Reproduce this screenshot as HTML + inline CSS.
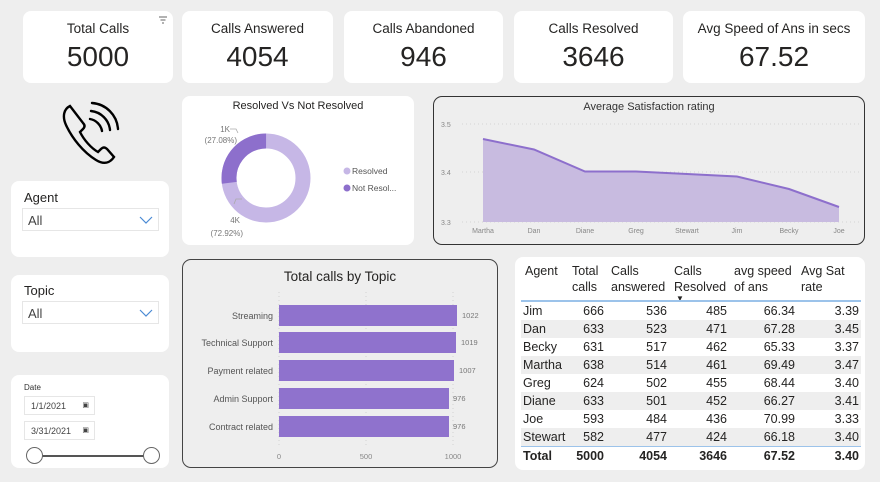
<!DOCTYPE html>
<html><head><meta charset="utf-8"><style>
*{box-sizing:border-box;margin:0;padding:0}
body{width:880px;height:482px;background:#eeeeee;font-family:"Liberation Sans","DejaVu Sans",sans-serif;position:relative;overflow:hidden;color:#252423}
.c{position:absolute;background:#fff;border-radius:8px}
.kt{position:absolute;width:100%;text-align:center;top:10px;font-size:13.5px;color:#252423}
.kv{position:absolute;width:100%;text-align:center;top:30px;font-size:28px;color:#252423}
.sl{font-size:13px;position:absolute;left:13px}
.dd{position:absolute;left:11px;width:137px;height:23px;border:1px solid #e6e6e6;font-size:13px;padding:4px 0 0 5px;color:#444}
.dd svg{position:absolute;right:5px;top:7px}
table{border-collapse:collapse;font-size:12.5px}
td{height:18px;padding:0 2px;text-align:right}
td:first-child{text-align:left;padding-left:2px}
tr.g td{background:#eeeeee}
</style></head><body>
<div class="c" style="left:23px;top:11px;width:150px;height:72px"><div class="kt">Total Calls</div><div class="kv">5000</div>
<svg style="position:absolute;right:5px;top:5px" width="10" height="8"><path d="M1 1h8M2.5 4h5M4 7h2" stroke="#666" stroke-width="1"/></svg></div>
<div class="c" style="left:182px;top:11px;width:151px;height:72px"><div class="kt">Calls Answered</div><div class="kv">4054</div></div>
<div class="c" style="left:344px;top:11px;width:159px;height:72px"><div class="kt">Calls Abandoned</div><div class="kv">946</div></div>
<div class="c" style="left:514px;top:11px;width:159px;height:72px"><div class="kt">Calls Resolved</div><div class="kv">3646</div></div>
<div class="c" style="left:683px;top:11px;width:182px;height:72px"><div class="kt">Avg Speed of Ans in secs</div><div class="kv">67.52</div></div>

<svg style="position:absolute;left:58px;top:100px" width="70" height="70" viewBox="0 0 70 70" fill="none" stroke="#000" stroke-width="2.4" stroke-linecap="round">
<path d="M12 6c-6 3-8 10-4 19c6 13 17 27 30 35c8 5 14 3 18-3l-7-8c-2-2-4-2-6 0l-3 3c-7-4-14-12-18-20l3-3c2-2 2-4 0-6z"/>
<path d="M32 19c6 1 11 6 12 12M33 11c10 1 18 9 19 19M34 3c14 1 25 12 26 26"/>
</svg>

<div class="c" style="left:11px;top:181px;width:158px;height:76px"><div class="sl" style="top:9px">Agent</div>
<div class="dd" style="top:27px">All<svg width="14" height="8"><path d="M1 1l6 6 6-6" stroke="#4a8ad4" fill="none" stroke-width="1.2"/></svg></div></div>
<div class="c" style="left:11px;top:275px;width:158px;height:77px"><div class="sl" style="top:8px">Topic</div>
<div class="dd" style="top:26px">All<svg width="14" height="8"><path d="M1 1l6 6 6-6" stroke="#4a8ad4" fill="none" stroke-width="1.2"/></svg></div></div>
<div class="c" style="left:11px;top:375px;width:158px;height:93px">
<div style="position:absolute;left:13px;top:8px;font-size:8px;color:#333">Date</div>
<div style="position:absolute;left:13px;top:21px;width:71px;height:19px;border:1px solid #e6e6e6;font-size:9px;padding:4px 0 0 6px;color:#444">1/1/2021<span style="position:absolute;right:5px;top:4px;font-size:7px">▣</span></div>
<div style="position:absolute;left:13px;top:46px;width:71px;height:19px;border:1px solid #e6e6e6;font-size:9px;padding:4px 0 0 6px;color:#444">3/31/2021<span style="position:absolute;right:5px;top:4px;font-size:7px">▣</span></div>
<div style="position:absolute;left:24px;top:80px;width:118px;height:2px;background:#555"></div>
<div style="position:absolute;left:15px;top:72px;width:17px;height:17px;border:1.5px solid #666;border-radius:50%;background:#fff"></div>
<div style="position:absolute;left:132px;top:72px;width:17px;height:17px;border:1.5px solid #666;border-radius:50%;background:#fff"></div>
</div>

<div class="c" style="left:182px;top:96px;width:232px;height:149px">
<div style="position:absolute;width:100%;text-align:center;top:4px;font-size:11px">Resolved Vs Not Resolved</div>
<svg style="position:absolute;left:0;top:0" width="232" height="149">
<circle cx="84" cy="82" r="37" fill="none" stroke="#c6b7e6" stroke-width="15"/>
<circle cx="84" cy="82" r="37" fill="none" stroke="#8d6fcc" stroke-width="15" stroke-dasharray="62.96 232.5" transform="rotate(-187.5 84 82) " />
<path d="M48 33h6l2 4M52 108l2-5h6" stroke="#aaa" fill="none" stroke-width="0.8"/>
<text x="48" y="36" font-size="8" fill="#777" text-anchor="end">1K</text>
<text x="55" y="47" font-size="8" fill="#777" text-anchor="end">(27.08%)</text>
<text x="58" y="127" font-size="8" fill="#777" text-anchor="end">4K</text>
<text x="61" y="140" font-size="8" fill="#777" text-anchor="end">(72.92%)</text>
<circle cx="165" cy="75" r="3.5" fill="#c6b7e6"/><text x="170" y="78" font-size="8.5" fill="#555">Resolved</text>
<circle cx="165" cy="92" r="3.5" fill="#8d6fcc"/><text x="170" y="95" font-size="8.5" fill="#555">Not Resol...</text>
</svg></div>

<div style="position:absolute;left:433px;top:96px;width:432px;height:149px;border:1.5px solid #333;border-radius:9px;background:#eeeeee">
<div style="position:absolute;width:100%;text-align:center;top:4px;font-size:11px;color:#333">Average Satisfaction rating</div>
<svg style="position:absolute;left:-1.5px;top:-1.5px" width="432" height="149">
<g stroke="#ccc" stroke-dasharray="1 3" stroke-width="0.8"><path d="M29 28h398M29 76h398M29 126h398"/></g>
<g font-size="7" fill="#888"><text x="8" y="31">3.5</text><text x="8" y="79">3.4</text><text x="8" y="129">3.3</text></g>
<path d="M50 43L101 53.5L152 75.5L203 75.5L254 78L304 80.5L356 93L406 111L406 126L50 126Z" fill="#c8bbe0"/>
<path d="M50 43L101 53.5L152 75.5L203 75.5L254 78L304 80.5L356 93L406 111" fill="none" stroke="#8d6fcc" stroke-width="2"/>
<g font-size="7" fill="#888" text-anchor="middle"><text x="50" y="137">Martha</text><text x="101" y="137">Dan</text><text x="152" y="137">Diane</text><text x="203" y="137">Greg</text><text x="254" y="137">Stewart</text><text x="304" y="137">Jim</text><text x="356" y="137">Becky</text><text x="406" y="137">Joe</text></g>
</svg></div>

<div style="position:absolute;left:182px;top:259px;width:316px;height:209px;border:1.5px solid #444;border-radius:9px;background:#eeeeee">
<div style="position:absolute;width:100%;text-align:center;top:9px;font-size:13.5px;color:#252423">Total calls by Topic</div>
<svg style="position:absolute;left:-1.5px;top:-1.5px" width="316" height="209">
<g stroke="#ccc" stroke-dasharray="1 3" stroke-width="0.8"><path d="M97 33v155M184 33v155M271 33v155"/></g>
<g fill="#8f72cd"><rect x="97" y="46" width="178" height="21"/><rect x="97" y="73" width="177" height="21"/><rect x="97" y="101" width="175" height="21"/><rect x="97" y="129" width="170" height="21"/><rect x="97" y="157" width="170" height="21"/></g>
<g font-size="9" fill="#555" text-anchor="end"><text x="91" y="60">Streaming</text><text x="91" y="87">Technical Support</text><text x="91" y="115">Payment related</text><text x="91" y="143">Admin Support</text><text x="91" y="171">Contract related</text></g>
<g font-size="7.5" fill="#777"><text x="280" y="59">1022</text><text x="279" y="86">1019</text><text x="277" y="114">1007</text><text x="271" y="142">976</text><text x="271" y="170">976</text></g>
<g font-size="7.5" fill="#888" text-anchor="middle"><text x="97" y="200">0</text><text x="184" y="200">500</text><text x="271" y="200">1000</text></g>
</svg></div>

<div class="c" style="left:515px;top:257px;width:350px;height:213px">
<div style="position:absolute;left:10px;top:6px;font-size:12.5px;line-height:16px">
<span style="position:absolute;left:0">Agent</span>
<span style="position:absolute;left:47px">Total<br>calls</span>
<span style="position:absolute;left:86px">Calls<br>answered</span>
<span style="position:absolute;left:149px">Calls<br>Resolved</span>
<span style="position:absolute;left:209px;white-space:nowrap">avg speed<br>of ans</span>
<span style="position:absolute;left:276px;white-space:nowrap">Avg Sat<br>rate</span>
<span style="position:absolute;left:151px;top:28px;font-size:8px">▼</span>
</div>
<div style="position:absolute;left:6px;top:43px;width:340px;height:1.5px;background:#9cc3ea"></div>
<table style="position:absolute;left:6px;top:45px;width:340px">
<colgroup><col style="width:47px"><col style="width:38px"><col style="width:63px"><col style="width:60px"><col style="width:68px"><col></colgroup>
<tr><td>Jim</td><td>666</td><td>536</td><td>485</td><td>66.34</td><td>3.39</td></tr>
<tr class="g"><td>Dan</td><td>633</td><td>523</td><td>471</td><td>67.28</td><td>3.45</td></tr>
<tr><td>Becky</td><td>631</td><td>517</td><td>462</td><td>65.33</td><td>3.37</td></tr>
<tr class="g"><td>Martha</td><td>638</td><td>514</td><td>461</td><td>69.49</td><td>3.47</td></tr>
<tr><td>Greg</td><td>624</td><td>502</td><td>455</td><td>68.44</td><td>3.40</td></tr>
<tr class="g"><td>Diane</td><td>633</td><td>501</td><td>452</td><td>66.27</td><td>3.41</td></tr>
<tr><td>Joe</td><td>593</td><td>484</td><td>436</td><td>70.99</td><td>3.33</td></tr>
<tr class="g"><td>Stewart</td><td>582</td><td>477</td><td>424</td><td>66.18</td><td>3.40</td></tr>
<tr style="font-weight:bold"><td style="border-top:1.5px solid #9cc3ea;height:19px">Total</td><td style="border-top:1.5px solid #9cc3ea">5000</td><td style="border-top:1.5px solid #9cc3ea">4054</td><td style="border-top:1.5px solid #9cc3ea">3646</td><td style="border-top:1.5px solid #9cc3ea">67.52</td><td style="border-top:1.5px solid #9cc3ea">3.40</td></tr>
</table></div>
</body></html>
